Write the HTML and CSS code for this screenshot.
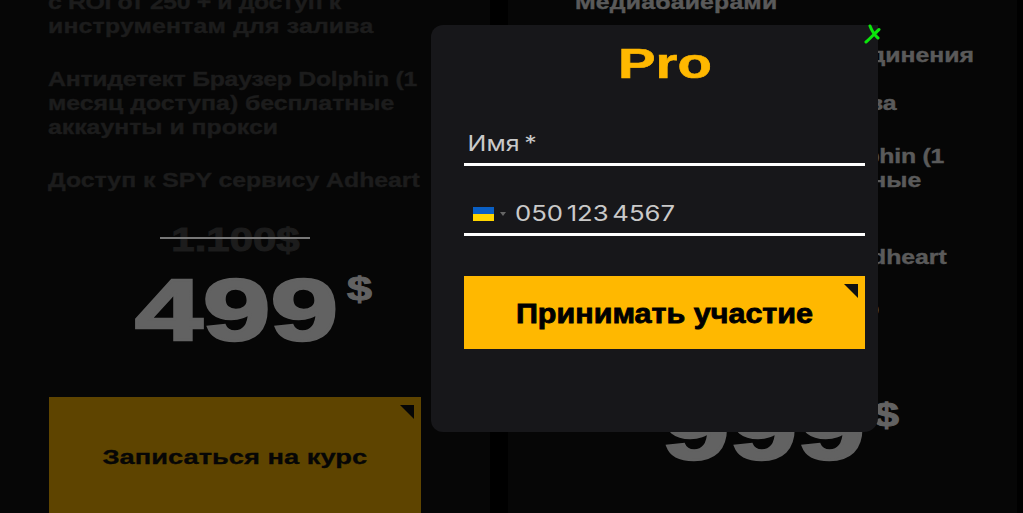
FILE: index.html
```html
<!DOCTYPE html>
<html lang="ru">
<head>
<meta charset="utf-8">
<title>Pro</title>
<link rel="stylesheet" href="styles.css">
</head>
<body>
<main class="page">
  <section class="card card-left">
    <ul class="features">
      <li class="feature"><span class="line line-narrower">с ROI от 250 + и доступ к</span><span class="line line-loose">инструментам для залива</span></li>
      <li class="feature"><span class="line line-narrow">Антидетект Браузер Dolphin (1</span><span class="line">месяц доступа) бесплатные</span><span class="line">аккаунты и прокси</span></li>
      <li class="feature"><span class="line">Доступ к SPY сервису Adheart</span></li>
    </ul>
    <div class="old-price"><span class="old-value">1.100$</span></div>
    <div class="price"><span class="amount">499</span><span class="currency">$</span></div>
    <a class="cta" href="#"><span class="cta-label">Записаться на курс</span></a>
  </section>
  <section class="card card-right">
    <ul class="features">
      <li class="feature"><span class="line line-loose">Медиабайерами</span></li>
      <li class="feature"><span class="line">Настройка прокси и соединения</span></li>
      <li class="feature tight"><span class="line">Инструментов для залива</span></li>
      <li class="feature"><span class="line line-narrow">Антидетект Браузер Dolphin (1</span><span class="line">месяц доступа) бесплатные</span><span class="line">аккаунты и прокси</span></li>
      <li class="feature"><span class="line">Доступ к SPY сервису Adheart</span></li>
      <li class="feature"><span class="line">Личный куратор: по ГЕО</span></li>
    </ul>
    <div class="price price-right"><span class="amount">999</span><span class="currency">$</span></div>
  </section>
</main>
<form class="modal">
  <h2 class="modal-title"><span class="title-text">Pro</span></h2>
  <svg class="close" width="18" height="20" viewBox="0 0 18 20" aria-hidden="true"><path d="M7 2C8.500 6 11 10.500 15 14M16 5.500C12 9 8 14 3 18" fill="none" stroke="#0be60b" stroke-width="3" stroke-linecap="round"/></svg>
  <div class="field field-name"><span class="field-text name-text">Имя *</span></div>
  <div class="field field-phone">
    <span class="flag"><span class="flag-blue"></span><span class="flag-yellow"></span></span>
    <span class="caret"></span>
    <span class="field-text phone-text">050 123 4567</span>
  </div>
  <button class="submit" type="button"><span class="submit-label">Принимать участие</span></button>
</form>
</body>
</html>
```
FILE: styles.css
```css
* { box-sizing: border-box; }
html, body { margin: 0; height: 100%; overflow: hidden; background: #000; }
body { font-family: "Liberation Sans", Arial, sans-serif; }

.page { display: flex; gap: 18px; width: 1017px; height: 513px; overflow: hidden; background: #000; }
.card { display: flex; flex-direction: column; flex: none; height: 700px; margin-top: -10px; background: #060606; }
.card-left { width: 490px; padding-left: 48px; color: #1c1c1c; }
.card-right { width: 509px; padding-left: 67px; color: #5a5a5a; }

.features { list-style: none; margin: 0; padding: 0; display: flex; flex-direction: column; gap: 29px; }
.feature.tight { margin-top: -5px; }
.line { display: block; height: 24px; line-height: 24px; font-size: 20px; font-weight: 700; -webkit-text-stroke: .4px currentColor; white-space: nowrap; transform-origin: left center; transform: scaleX(1.24); }
.line-narrow { letter-spacing: -.2px; }
.line-narrower { letter-spacing: -.3px; }
.line-loose { letter-spacing: .15px; }

.old-price { position: relative; width: 150px; height: 34px; margin: 31px 0 0 112px; text-align: center; }
.old-price::after { content: ""; position: absolute; left: 0; right: 0; top: 14px; height: 2px; background: #777; }
.old-value { display: inline-block; font-size: 33px; line-height: 34px; font-weight: 700; -webkit-text-stroke: 1px currentColor; transform: scaleX(1.27); }

.price { display: flex; align-items: flex-start; margin: 14px 0 0 87px; color: #626262; }
.price-right { margin-top: 68px; margin-left: 87px; }
.price-right .currency { margin-top: 4px; }
.amount { display: block; width: 203px; height: 78px; font-size: 87px; line-height: 78px; font-weight: 700; -webkit-text-stroke: 2.5px currentColor; white-space: nowrap; transform-origin: left center; transform: scaleX(1.4); }
.currency { display: block; margin: -3px 0 0 9px; font-size: 34px; line-height: 40px; font-weight: 700; -webkit-text-stroke: 1px currentColor; transform-origin: left center; transform: scaleX(1.32); }

.cta { display: flex; align-items: center; justify-content: center; position: relative; width: 372px; height: 120px; margin: 48px 0 0 1px; background: #5e4400; color: #060606; text-decoration: none; }
.cta::after, .submit::after { content: ""; position: absolute; width: 14px; height: 14px; top: 8px; right: 7px; background: #060606; clip-path: polygon(0 0, 100% 0, 100% 100%); }
.cta-label { display: inline-block; font-size: 21px; font-weight: 700; -webkit-text-stroke: .3px currentColor; white-space: nowrap; transform: scaleX(1.3); }

.modal { position: absolute; left: 431px; top: 25px; width: 447px; height: 407px; padding: 0 12px 0 33px; display: flex; flex-direction: column; background: #17171a; border-radius: 12px; border-top-right-radius: 0; border-bottom-right-radius: 14px; }
.modal-title { margin: 17px 0 0; height: 42px; text-align: center; font-size: 43px; line-height: 42px; font-weight: 700; color: #ffb800; }
.title-text { display: inline-block; -webkit-text-stroke: .6px #ffb800; transform: scaleX(1.31); }
.close { position: absolute; top: -1px; right: -3px; }

.field { display: flex; align-items: center; width: 401px; height: 43px; padding-top: 2px; border-bottom: 3px solid #fff; }
.field-name { margin-top: 39px; }
.field-phone { margin-top: 27px; padding-left: 9px; }
.field-text { display: block; padding-left: 3px; font: 400 21px/26px Inter, sans-serif; color: #c9c9c9; white-space: nowrap; transform-origin: left center; }
.name-text { word-spacing: -2px; transform: scaleX(1.19); }
.phone-text { margin-left: 9px; padding-left: 0; word-spacing: -3px; transform: scaleX(1.225); }
.flag { display: flex; flex-direction: column; width: 21px; height: 14px; flex: none; }
.flag-blue { flex: 1; background: #0a5fc4; }
.flag-yellow { flex: 1; background: #ffd500; }
.caret { width: 0; height: 0; margin-left: 6px; border: 3px solid transparent; border-top: 4px solid #666; border-bottom: 0; }

.submit { position: relative; display: flex; align-items: center; justify-content: center; width: 401px; height: 73px; margin-top: 40px; padding: 2px 0 0; border: 0; background: #ffb800; color: #000; }
.submit::after { background: #111; }
.submit-label { font: 700 27px/30px "Liberation Sans", Arial, sans-serif; -webkit-text-stroke: .8px #000; white-space: nowrap; transform: scaleX(1.13); }
```
